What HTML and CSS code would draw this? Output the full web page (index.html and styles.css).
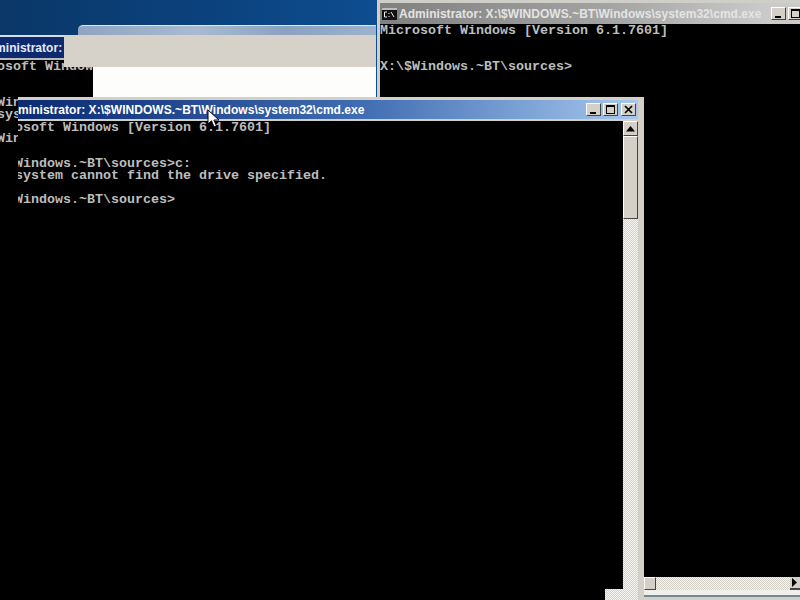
FILE: index.html
```html
<!DOCTYPE html>
<html lang="en">
<head>
<meta charset="utf-8">
<title>cmd.exe</title>
<link rel="stylesheet" href="styles.css">
</head>
<body>
<div class="desktop">
  <div class="win win-left">
    <div class="title title-left"><span class="title-text shift-left">Administrator: X:\$WINDOWS.~BT\Windows\system32\cmd.exe</span></div>
    <pre class="console console-left">Microsoft Windows [Version 6.1.7601]


X:\$Windows.~BT\sources&gt;c:
The system cannot find the drive specified.

X:\$Windows.~BT\sources&gt;</pre>
  </div>

  <div class="setup">
    <div class="glass"></div>
    <div class="setup-band"></div>
    <div class="setup-page"></div>
  </div>

  <div class="win win-right">
    <div class="title title-right">
      <svg class="cmd-icon" width="15" height="12" viewBox="0 0 15 12" aria-hidden="true">
        <rect width="15" height="12" fill="#111"/>
        <rect y="0" width="15" height="2" fill="#bdbdbd"/>
        <path d="M5 4H2.500v5H5M7 5v1M7 8v1M9 4l3 5" fill="none" stroke="#eee" stroke-width="1"/>
      </svg>
      <span class="title-text title-text-right">Administrator: X:\$WINDOWS.~BT\Windows\system32\cmd.exe</span>
      <div class="buttons buttons-right">
        <span class="btn"><i class="glyph-min"></i></span>
        <span class="btn"><i class="glyph-max"></i></span>
      </div>
    </div>
    <pre class="console console-right">Microsoft Windows [Version 6.1.7601]


X:\$Windows.~BT\sources&gt;</pre>
    <div class="hscroll">
      <span class="hthumb"></span>
      <span class="checker hchecker"></span>
      <span class="harrow"><svg width="6" height="9" viewBox="0 0 6 9"><path d="M0 0l5 4.500L0 9z" fill="#000"/></svg></span>
    </div>
    <div class="right-foot"></div>
  </div>

  <div class="win win-front">
    <div class="title title-front">
      <span class="title-text shift-front">Administrator: X:\$WINDOWS.~BT\Windows\system32\cmd.exe</span>
      <div class="buttons">
        <span class="btn"><i class="glyph-min"></i></span>
        <span class="btn btn-gap"><i class="glyph-max"></i></span>
        <span class="btn btn-close"><svg width="9" height="9" viewBox="0 0 9 9"><path d="M1 1l7 7M8 1L1 8" stroke="#000" stroke-width="1.700" fill="none"/></svg></span>
      </div>
    </div>
    <div class="front-body">
      <pre class="console console-front">Microsoft Windows [Version 6.1.7601]


X:\$Windows.~BT\sources&gt;c:
The system cannot find the drive specified.

X:\$Windows.~BT\sources&gt;</pre>
      <div class="vscroll">
        <span class="varrow"><svg width="9" height="6" viewBox="0 0 9 6"><path d="M0 5.500L4.500 0 9 5.500z" fill="#000"/></svg></span>
        <span class="vthumb"></span>
        <span class="checker vchecker"></span>
      </div>
    </div>
  </div>

  <div class="checker ghost"></div>

  <svg class="cursor" width="13" height="20" viewBox="0 0 13 20" aria-hidden="true">
    <path d="M1 1v14l3.500-3.200L7 18l2.500-1-2.600-6H12z" fill="#fff" stroke="#000" stroke-width="1"/>
  </svg>
</div>
</body>
</html>
```

FILE: styles.css
```css
html, body {
  margin: 0;
  padding: 0;
  background: #000;
}

.desktop {
  position: relative;
  width: 800px;
  height: 600px;
  overflow: hidden;
  background: linear-gradient(90deg, #0a3768 0%, #0c4685 35%, #105ba5 70%, #1463ad 100%);
}

.win {
  position: absolute;
  overflow: hidden;
  box-sizing: border-box;
}

.title {
  display: flex;
  align-items: center;
  overflow: hidden;
  white-space: nowrap;
}

.title-text {
  font-family: "Liberation Sans", sans-serif;
  font-weight: 700;
  font-size: 12px;
  letter-spacing: 0.04px;
  color: #fff;
}

.console {
  margin: 0;
  font-family: "Liberation Mono", monospace;
  font-size: 13.33px;
  line-height: 12px;
  font-weight: 700;
  color: #bdbdbd;
  background: #000;
  overflow: hidden;
}

.checker {
  background: repeating-conic-gradient(#d4d0c8 0 25%, #f6f5f1 0 50%) 0 0 / 2px 2px;
}

/* back left window */
.win-left {
  left: 0;
  top: 35px;
  width: 140px;
  height: 565px;
  background: #000;
  border-top: 2px solid #d8dde6;
}

.title-left {
  height: 21px;
  background: #0d2a6e;
  border-bottom: 2px solid #b9bcc2;
  box-sizing: content-box;
}

.shift-left {
  margin-left: -21px;
  color: #e6eaf6;
}

.console-left {
  padding: 1px 0 0;
  margin-left: -35px;
  height: 500px;
}

/* setup window behind */
.setup {
  position: absolute;
  left: 64px;
  top: 25px;
  width: 312px;
  height: 80px;
  display: flex;
  flex-direction: column;
}

.glass {
  height: 10px;
  margin-left: 14px;
  box-sizing: border-box;
  border-top: 1px solid #dfe7f1;
  border-radius: 5px 0 0 0;
  background: linear-gradient(90deg, #8ea4c2 0%, #a9bad0 40%, #8aa2c0 70%, #9db2cc 100%);
}

.setup-band {
  height: 32px;
  background: #d6d2ca;
}

.setup-page {
  flex: 1;
  margin-left: 29px;
  background: #fdfdfb;
}

/* right window */
.win-right {
  left: 377px;
  top: 0;
  width: 460px;
  height: 640px;
  background: #d4d0c8;
  border: 3px solid #d0cec8;
  display: flex;
  flex-direction: column;
}

.title-right {
  height: 21px;
  flex: none;
  background: linear-gradient(90deg, #808080 0%, #a3a3a3 50%, #cacaca 85%);
}

.cmd-icon {
  margin-left: 2px;
  margin-right: 2px;
  flex: none;
}

.title-text-right {
  color: #e4e4e4;
}

.buttons {
  display: flex;
  margin-left: auto;
  margin-right: 2px;
  gap: 2px;
}

.buttons-right {
  margin-left: 0;
  position: absolute;
  left: 391px;
  top: 4px;
}

.btn {
  width: 15px;
  height: 13px;
  box-sizing: border-box;
  background: #d4d0c8;
  border: 1px solid;
  border-color: #fff #444 #444 #fff;
  display: flex;
  align-items: center;
  justify-content: center;
  position: relative;
}

.btn-close {
  margin-left: 1px;
}

.glyph-min {
  width: 6px;
  height: 2px;
  background: #000;
  align-self: flex-end;
  margin-bottom: 1px;
  margin-right: 2px;
}

.glyph-max {
  width: 9px;
  height: 9px;
  box-sizing: border-box;
  border: 1px solid #000;
  border-top-width: 2px;
}

.console-right {
  height: 553px;
  flex: none;
  padding-top: 1px;
  box-sizing: border-box;
}

.hscroll {
  height: 13px;
  flex: none;
  display: flex;
  margin-left: 264px;
  width: 156px;
}

.hthumb {
  width: 12px;
  box-sizing: border-box;
  background: #d4d0c8;
  border: 1px solid;
  border-color: #fff #444 #444 #fff;
}

.hchecker {
  flex: 1;
}

.harrow {
  width: 10px;
  box-sizing: border-box;
  background: #d4d0c8;
  border-bottom: 2px solid #444;
  display: flex;
  align-items: center;
  justify-content: center;
}

.right-foot {
  height: 5px;
  background: #f0efe9;
  border-bottom: 2px solid #6f8a94;
  flex: none;
}

/* front window */
.win-front {
  left: 18px;
  top: 97px;
  width: 626px;
  height: 530px;
  background: #d4d0c8;
  border-top: 3px solid #d4d0c8;
  padding-right: 6px;
  display: flex;
  flex-direction: column;
}

.title-front {
  height: 19px;
  flex: none;
  background: linear-gradient(90deg, #0b2a72 0%, #3f6cb2 55%, #a6c8ee 100%);
}

.shift-front {
  margin-left: -16px;
}

.front-body {
  display: flex;
  flex: 1;
  min-height: 0;
  padding-top: 2px;
}

.console-front {
  flex: 1;
  margin-left: -35px;
  padding-top: 1px;
}

.vscroll {
  width: 15px;
  flex: none;
  display: flex;
  flex-direction: column;
}

.varrow {
  height: 15px;
  flex: none;
  box-sizing: border-box;
  background: #d4d0c8;
  border: 1px solid;
  border-color: #fff #444 #444 #fff;
  display: flex;
  align-items: center;
  justify-content: center;
}

.vthumb {
  height: 83px;
  flex: none;
  box-sizing: border-box;
  background: #d4d0c8;
  border: 1px solid;
  border-color: #fff #444 #444 #fff;
}

.vchecker {
  flex: 1;
}

.ghost {
  position: absolute;
  left: 605px;
  top: 589px;
  width: 20px;
  height: 11px;
}

.cursor {
  position: absolute;
  left: 207px;
  top: 109px;
}
```
